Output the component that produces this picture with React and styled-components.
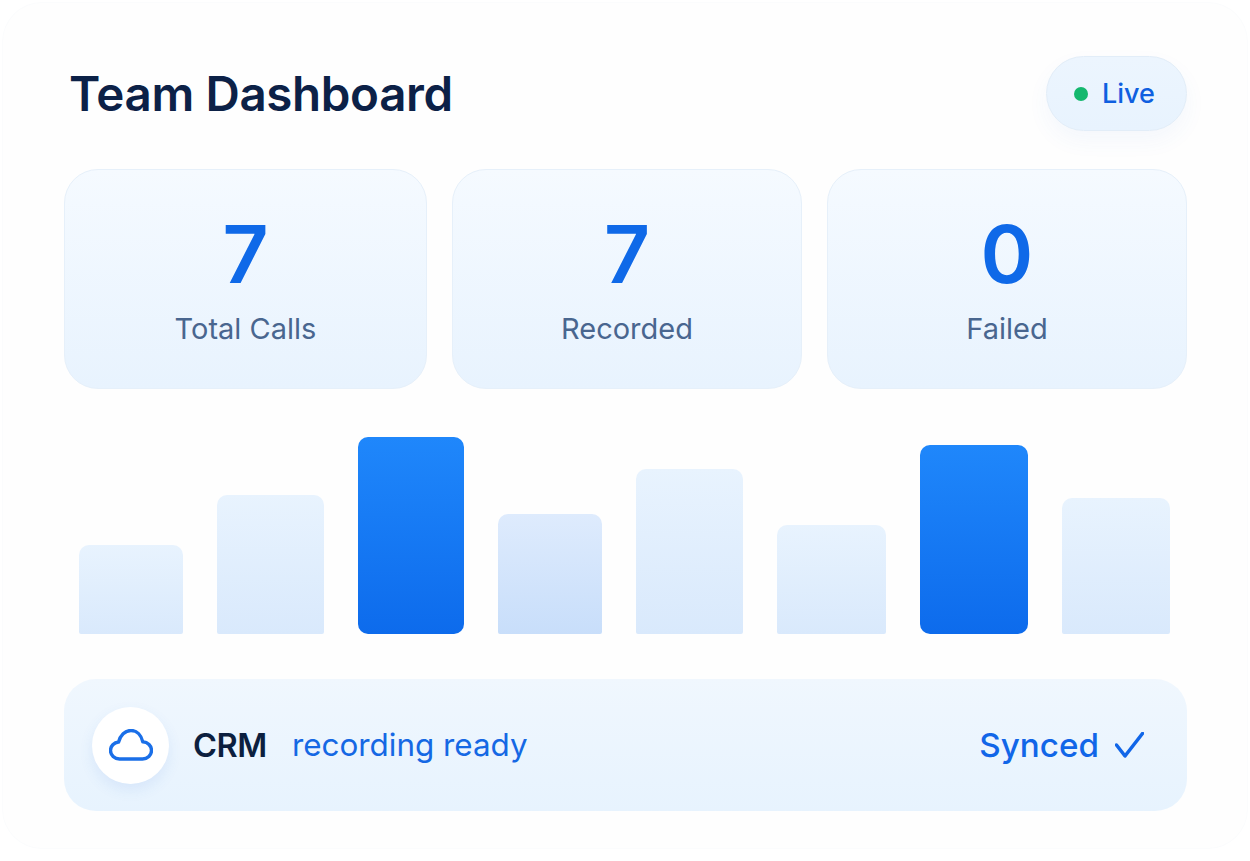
import React from "react";
import styled, { createGlobalStyle } from "styled-components";

const Global = createGlobalStyle`
  html, body { margin: 0; padding: 0; background: #ffffff; }
  body { font-family: "Inter", "Noto Sans", sans-serif; -webkit-font-smoothing: antialiased; }
`;

const Frame = styled.main`
  box-sizing: border-box;
  width: 1246px;
  height: 847px;
  margin: 2px 2px 12px 2px;
  padding: 54px 61px 36px 62px;
  display: flex;
  flex-direction: column;
  border-radius: 40px;
  background: #fefefe;
  box-shadow: inset 0 0 0 1px #fbfcfd;
`;

const Header = styled.header`
  display: flex;
  align-items: center;
  justify-content: space-between;
  height: 75px;
`;

const Title = styled.h1`
  margin: 0 0 0 5px;
  font-size: 47.5px;
  font-weight: 600;
  letter-spacing: -0.35px;
  color: #0c2147;
`;

const LivePill = styled.div`
  box-sizing: border-box;
  width: 141px;
  height: 75px;
  display: flex;
  align-items: center;
  gap: 14px;
  padding-left: 27px;
  border-radius: 38px;
  background: linear-gradient(180deg, #ecf5fe, #e8f3fe);
  border: 1px solid #e2edf8;
  box-shadow: 0 10px 22px rgba(60, 120, 220, 0.05);
  font-size: 27px;
  font-weight: 500;
  color: #0f5fe0;
`;

const Dot = styled.span`
  width: 14px;
  height: 14px;
  border-radius: 50%;
  background: #14b86e;
`;

const Stats = styled.section`
  display: grid;
  grid-template-columns: 363fr 350fr 360fr;
  gap: 25px;
  margin-top: 38px;
`;

const StatCard = styled.div`
  box-sizing: border-box;
  height: 220px;
  display: flex;
  flex-direction: column;
  align-items: center;
  padding-top: 38px;
  border-radius: 34px;
  background: linear-gradient(180deg, #f5faff, #e8f3fe);
  border: 1px solid #e6f0fa;
`;

const StatValue = styled.div`
  font-size: 80px;
  line-height: 92px;
  font-weight: 600;
  color: #0f69e8;
`;

const StatLabel = styled.div`
  margin-top: 11px;
  font-size: 29px;
  line-height: 36px;
  color: #49668f;
`;

const Chart = styled.section`
  display: flex;
  align-items: flex-end;
  gap: 34px;
  height: 197px;
  margin: 48px 16px 0 15px;
`;

const Bar = styled.div`
  flex: none;
  width: ${(p) => p.$w}px;
  height: ${(p) => p.$h}px;
  border-radius: ${(p) => (p.$strong ? "10px" : "10px 10px 2px 2px")};
  background: ${(p) =>
    p.$strong
      ? "linear-gradient(180deg, #1f87fb, #0d6bec)"
      : p.$deep
      ? "linear-gradient(180deg, #deebfd, #c8defa)"
      : "linear-gradient(180deg, #e8f3fe, #d9e9fc)"};
`;

const SyncBar = styled.section`
  box-sizing: border-box;
  height: 132px;
  margin-top: 45px;
  display: flex;
  align-items: center;
  padding: 0 43px 0 28px;
  border-radius: 32px;
  background: linear-gradient(180deg, #f0f7fe, #e7f3fe);
`;

const IconBubble = styled.div`
  width: 77px;
  height: 77px;
  display: flex;
  align-items: center;
  justify-content: center;
  border-radius: 50%;
  background: #ffffff;
  box-shadow: 0 6px 14px rgba(60, 120, 220, 0.1);
`;

const CrmLabel = styled.span`
  margin-left: 24px;
  font-size: 32.5px;
  font-weight: 600;
  letter-spacing: -0.4px;
  color: #0c1f3f;
`;

const ReadyLabel = styled.span`
  margin-left: 25px;
  font-size: 31.4px;
  color: #1568e4;
`;

const Synced = styled.div`
  margin-left: auto;
  display: flex;
  align-items: center;
  gap: 16px;
  font-size: 33.2px;
  font-weight: 500;
  color: #1166e8;
`;

const stats = [
  ["7", "Total Calls"],
  ["7", "Recorded"],
  ["0", "Failed"],
];

const bars = [
  { w: 104, h: 89 },
  { w: 107, h: 139 },
  { w: 106, h: 197, strong: true },
  { w: 104, h: 120, deep: true },
  { w: 107, h: 165 },
  { w: 109, h: 109 },
  { w: 108, h: 189, strong: true },
  { w: 108, h: 136 },
];

export default function App() {
  return (
    <>
      <Global />
      <Frame>
        <Header>
          <Title>Team Dashboard</Title>
          <LivePill>
            <Dot />
            Live
          </LivePill>
        </Header>
        <Stats>
          {stats.map(([value, label]) => (
            <StatCard key={label}>
              <StatValue>{value}</StatValue>
              <StatLabel>{label}</StatLabel>
            </StatCard>
          ))}
        </Stats>
        <Chart>
          {bars.map((b, i) => (
            <Bar key={i} $w={b.w} $h={b.h} $strong={b.strong} $deep={b.deep} />
          ))}
        </Chart>
        <SyncBar>
          <IconBubble>
            <svg width="44" height="32" viewBox="0 0 44 32" fill="none">
              <path
                d="M10.5 30C5.5 30 1.5 26.2 1.5 21.5C1.5 17 5 13.4 9.6 13C11.2 6.5 16 1.5 22 1.5C27.8 1.5 32.3 6 33.8 12.8C38.8 13 42.5 16.9 42.5 21.5C42.5 26.2 38.5 30 33.5 30Z"
                stroke="#1a6fe8"
                strokeWidth="3.4"
                strokeLinejoin="round"
              />
            </svg>
          </IconBubble>
          <CrmLabel>CRM</CrmLabel>
          <ReadyLabel>recording ready</ReadyLabel>
          <Synced>
            Synced
            <svg width="29" height="26" viewBox="0 0 29 26" fill="none">
              <path
                d="M1.5 13L10 24L27.5 1.5"
                stroke="#1166e8"
                strokeWidth="3.5"
                strokeLinecap="round"
                strokeLinejoin="round"
              />
            </svg>
          </Synced>
        </SyncBar>
      </Frame>
    </>
  );
}
